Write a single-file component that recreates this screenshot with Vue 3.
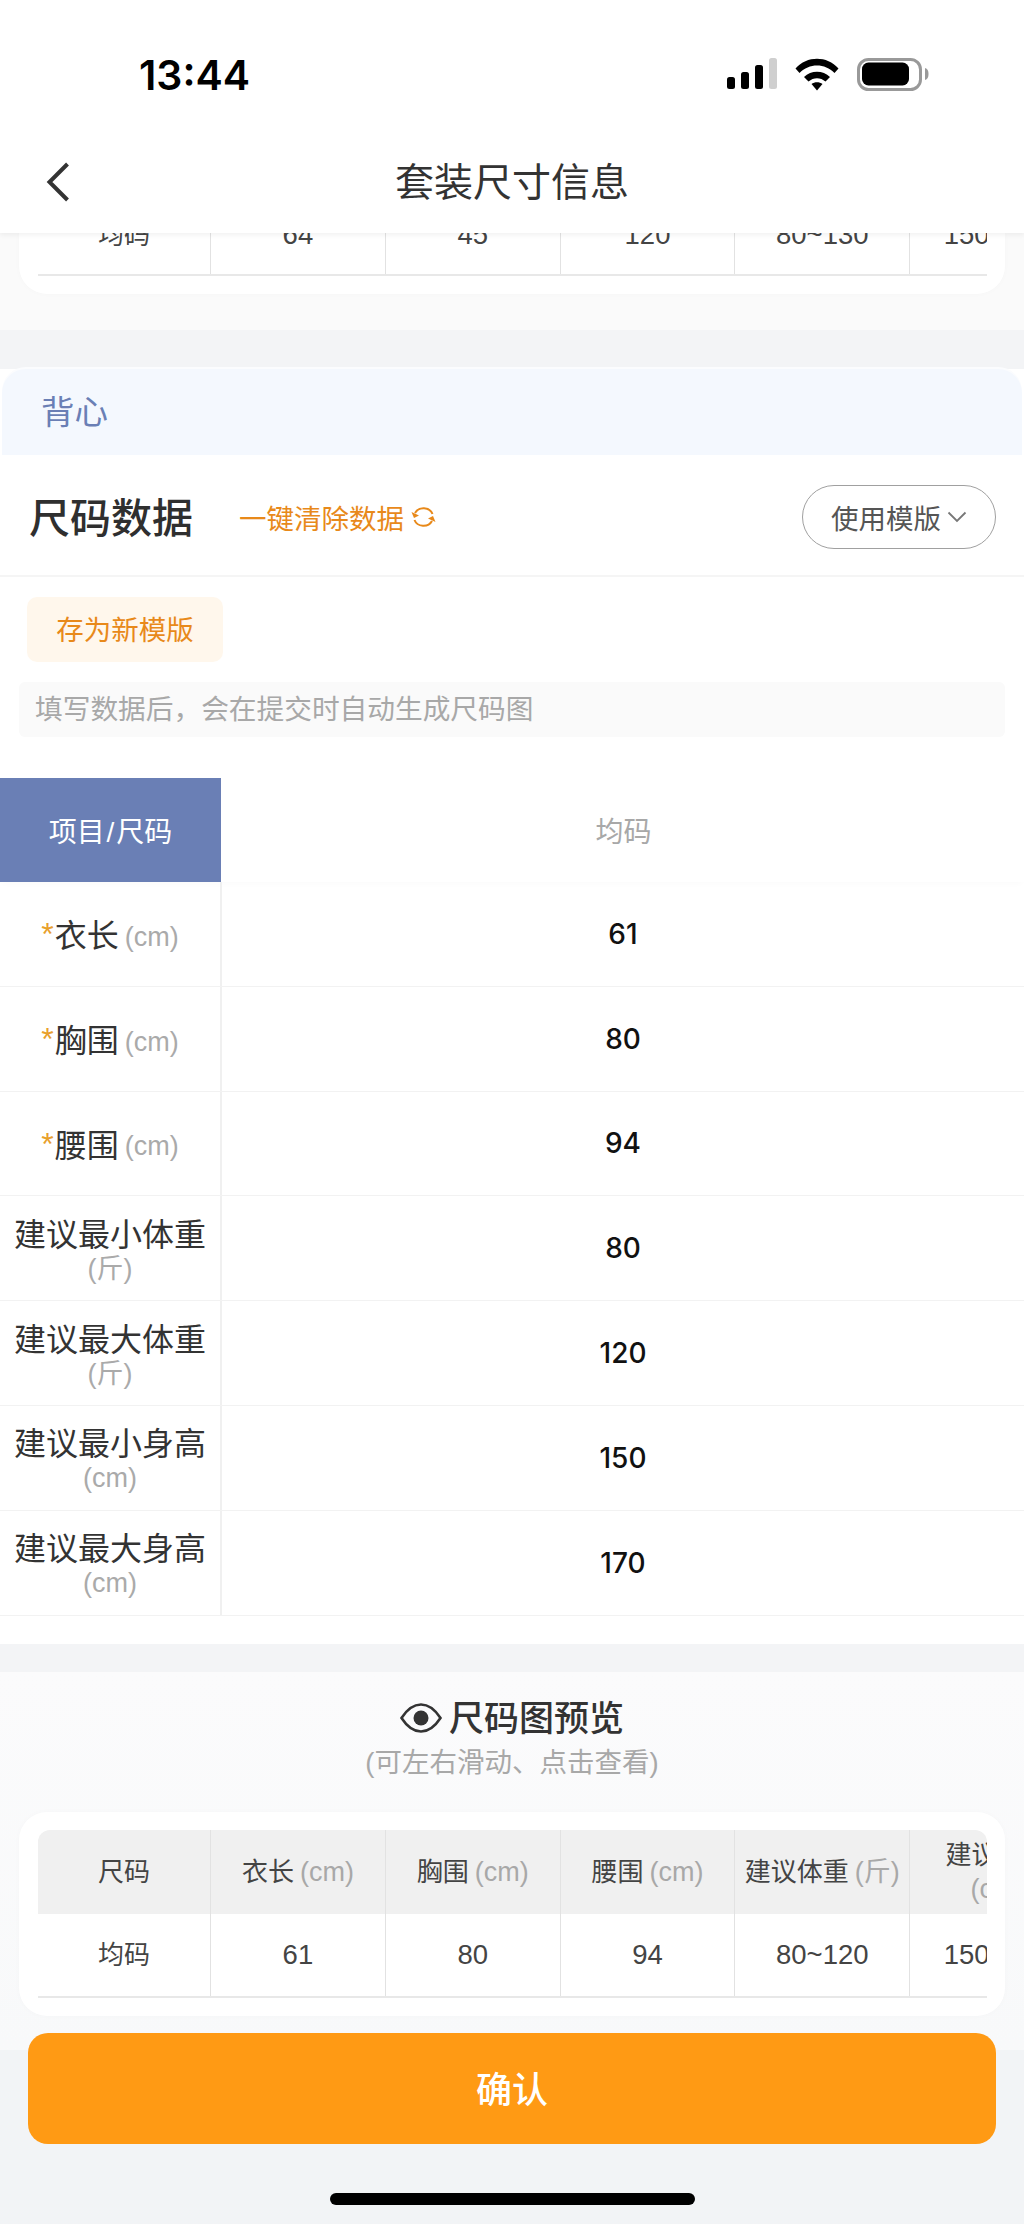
<script setup>
const topRow = ['均码', '64', '45', '120', '80~130', '150~170']
const dataRows = [
  { star: true, name: '衣长', unit: '(cm)', value: '61' },
  { star: true, name: '胸围', unit: '(cm)', value: '80' },
  { star: true, name: '腰围', unit: '(cm)', value: '94' },
  { name: '建议最小体重', unit: '(斤)', value: '80', stacked: true },
  { name: '建议最大体重', unit: '(斤)', value: '120', stacked: true },
  { name: '建议最小身高', unit: '(cm)', value: '150', stacked: true },
  { name: '建议最大身高', unit: '(cm)', value: '170', stacked: true }
]
const previewHead = [
  { name: '尺码' },
  { name: '衣长', unit: '(cm)' },
  { name: '胸围', unit: '(cm)' },
  { name: '腰围', unit: '(cm)' },
  { name: '建议体重', unit: '(斤)' },
  { name: '建议身高', unit: '(cm)', stacked: true }
]
const previewRow = ['均码', '61', '80', '94', '80~120', '150~170']
</script>

<template>
  <div class="page">
    <header class="top">
      <div class="status">
        <span class="time">13:44</span>
        <div class="status-icons">
          <svg width="50" height="32" viewBox="0 0 50 32">
            <rect x="0" y="19" width="8" height="12" rx="2.5" fill="#000" />
            <rect x="14" y="14" width="8" height="17" rx="2.5" fill="#000" />
            <rect x="28" y="7" width="8" height="24" rx="2.5" fill="#000" />
            <rect x="42" y="0" width="8" height="31" rx="2.5" fill="#cfcfcf" />
          </svg>
          <svg width="44" height="33" viewBox="0 0 44 33">
            <path d="M0.5 10.5 C12 -2.5 32 -2.5 43.5 10.5 L39.5 15 C30 5 14 5 4.500 15 Z" fill="#000" />
            <path d="M9 19 C16 12 28 12 35 19 L30.500 23.500 C25.500 19 18.500 19 13.500 23.500 Z" fill="#000" />
            <path d="M16.500 26 C19.500 23.500 24.500 23.500 27.500 26 L22 32.500 Z" fill="#000" />
          </svg>
          <svg width="72" height="33" viewBox="0 0 72 33">
            <rect x="1.500" y="1.500" width="62" height="30" rx="10" fill="none" stroke="#999" stroke-width="3" />
            <rect x="5" y="4.500" width="47" height="23" rx="6.500" fill="#000" />
            <path d="M68 10 C70.500 10.500 71.500 13 71.500 16 C71.500 19 70.500 21.500 68 22 Z" fill="#999" />
          </svg>
        </div>
      </div>
      <div class="nav">
        <svg class="back" width="24" height="40" viewBox="0 0 24 40">
          <path d="M21.500 2 L3.500 20 L21.500 38" fill="none" stroke="#333" stroke-width="4" />
        </svg>
        <h1 class="nav-title">套装尺寸信息</h1>
      </div>
    </header>

    <section class="prev-section">
      <div class="sheet sheet-clipped">
        <div class="sheet-table">
          <div class="sheet-row row-clipped">
            <span v-for="(c, i) in topRow" :key="i" class="sheet-cell clipped-cell" :class="{ num: i > 0 }">{{ c }}</span>
          </div>
        </div>
      </div>
    </section>

    <section class="editor">
      <div class="garment">背心</div>
      <div class="data-head">
        <h2 class="data-title">尺码数据</h2>
        <span class="clear">
          一键清除数据
          <svg width="25" height="22" viewBox="0 0 25 22">
            <path d="M21.500 8 A9.500 8.500 0 0 0 4 7" fill="none" stroke="#e8891a" stroke-width="2" />
            <path d="M3.500 14 A9.500 8.500 0 0 0 21 15" fill="none" stroke="#e8891a" stroke-width="2" />
            <path d="M0.500 6 L8 9.500 L3 12 Z" fill="#e8891a" />
            <path d="M24.500 16 L17 12.500 L22 10 Z" fill="#e8891a" />
          </svg>
        </span>
        <span class="template-btn">
          使用模版
          <svg width="20" height="12" viewBox="0 0 20 12">
            <path d="M1.500 1.500 L10 10 L18.500 1.500" fill="none" stroke="#777" stroke-width="1.800" />
          </svg>
        </span>
      </div>
      <div class="save-wrap"><span class="save-btn">存为新模版</span></div>
      <p class="hint">填写数据后，会在提交时自动生成尺码图</p>

      <div class="table">
        <div class="table-head">
          <div class="head-left">项目 / 尺码</div>
          <div class="head-right">均码</div>
        </div>
        <div v-for="r in dataRows" :key="r.name" class="table-row">
          <div class="row-left" :class="{ stacked: r.stacked }">
            <template v-if="r.stacked">
              <span class="row-name">{{ r.name }}</span>
              <span class="row-unit unit-line">{{ r.unit }}</span>
            </template>
            <template v-else>
              <span class="star">*</span><span class="row-name">{{ r.name }}</span>
              <span class="row-unit">{{ r.unit }}</span>
            </template>
          </div>
          <div class="row-value">{{ r.value }}</div>
        </div>
      </div>
    </section>

    <section class="preview">
      <div class="preview-title">
        <svg width="42" height="30" viewBox="0 0 42 30">
          <path d="M1.500 15 C8 5 14 1.500 21 1.500 C28 1.500 34 5 40.500 15 C34 25 28 28.500 21 28.500 C14 28.500 8 25 1.500 15 Z" fill="none" stroke="#333" stroke-width="2.600" />
          <circle cx="21" cy="15" r="7.500" fill="#333" />
        </svg>
        <span class="preview-name">尺码图预览</span>
      </div>
      <p class="preview-sub">(可左右滑动、点击查看)</p>
      <div class="sheet">
        <div class="sheet-table">
          <div class="sheet-row sheet-head">
            <span v-for="h in previewHead" :key="h.name" class="sheet-cell" :class="{ 'cell-stacked': h.stacked }">
              <span>{{ h.name }}</span>
              <span v-if="h.unit" class="sheet-unit">{{ h.unit }}</span>
            </span>
          </div>
          <div class="sheet-row">
            <span v-for="(c, i) in previewRow" :key="i" class="sheet-cell" :class="{ num: i > 0 }">{{ c }}</span>
          </div>
        </div>
      </div>
    </section>

    <footer class="footer">
      <button class="confirm" type="button">确认</button>
      <div class="home-bar"></div>
    </footer>
  </div>
</template>

<style>
html, body { margin: 0; padding: 0; background: #fff; }
</style>

<style scoped>
.page {
  width: 1024px;
  height: 2224px;
  overflow: hidden;
  display: flex;
  flex-direction: column;
  font-family: "Liberation Sans", "Noto Sans CJK SC", sans-serif;
  color: #333;
}
.top {
  height: 233px;
  background: #fff;
  box-shadow: 0 2px 5px rgba(0, 0, 0, 0.06);
  position: relative;
  z-index: 2;
  flex: none;
}
.status {
  height: 136px;
  display: flex;
  justify-content: space-between;
  align-items: flex-start;
  padding: 0 95px 0 139px;
  box-sizing: border-box;
}
.time {
  font-family: Inter, sans-serif;
  font-size: 41px;
  font-weight: 600;
  line-height: 48px;
  margin-top: 51px;
  color: #000;
}
.status-icons {
  display: flex;
  gap: 18px;
  margin-top: 58px;
}
.nav {
  height: 94px;
  position: relative;
  display: flex;
  align-items: center;
  justify-content: center;
}
.back {
  position: absolute;
  left: 46px;
  top: 26px;
}
.nav-title {
  margin: 0;
  font-size: 39px;
  font-weight: 400;
  color: #333;
  line-height: 92px;
}
.prev-section {
  height: 97px;
  flex: none;
  background: #fafafa;
  border-bottom: 39px solid #f3f4f6;
  padding: 0 19px;
}
.sheet {
  background: #fff;
  border-radius: 28px;
  padding: 18px 18px 18px 19px;
  box-shadow: 0 0 6px rgba(0, 0, 0, 0.02);
}
.sheet-clipped {
  padding-top: 0;
  border-radius: 0 0 28px 28px;
}
.sheet-table {
  width: 949px;
  overflow: hidden;
  border-bottom: 2px solid #e8e8e8;
  border-radius: 12px 12px 0 0;
}
.sheet-clipped .sheet-table { border-radius: 0; }
.sheet-row {
  display: flex;
  width: 1100px;
  height: 82px;
}
.sheet-head {
  background: #f0f0f0;
  height: 84px;
}
.row-clipped { height: 41px; }
.sheet-cell {
  flex: none;
  width: 174.800px;
  box-sizing: border-box;
  border-right: 1.500px solid #e2e2e2;
  display: flex;
  flex-wrap: wrap;
  align-content: center;
  align-items: center;
  justify-content: center;
  gap: 0 6px;
  font-size: 26px;
  line-height: 34px;
  color: #444;
}
.sheet-cell.num { font-size: 27.500px; }
.sheet-cell:first-child { width: 173px; }
.sheet-cell:last-child { border-right: 0; }
.clipped-cell {
  align-content: flex-start;
  overflow: hidden;
  line-height: 0;
  padding-top: 2px;
}
.cell-stacked { flex-direction: column; flex-wrap: nowrap; justify-content: center; }
.sheet-unit { color: #a8a8a8; font-size: 27px; }
.editor {
  flex: none;
  background: #fff;
}
.garment {
  height: 86px;
  margin: 0 2px;
  padding-left: 39px;
  box-sizing: border-box;
  background: #f4f8fe;
  border-radius: 24px 24px 0 0;
  box-shadow: 0 -2px 0 #fbfcfe;
  color: #6a7fb5;
  font-size: 33.500px;
  line-height: 88px;
}
.data-head {
  height: 122px;
  box-sizing: border-box;
  border-bottom: 2px solid #f5f5f5;
  display: flex;
  align-items: center;
  padding: 4px 28px 0 29px;
}
.data-title {
  margin: -4px 0 0;
  font-size: 41px;
  font-weight: 500;
  color: #2f2f2f;
}
.clear {
  margin-left: 46px;
  display: flex;
  align-items: center;
  gap: 7px;
  font-size: 27.500px;
  color: #e8891a;
}
.template-btn {
  margin-left: auto;
  width: 194px;
  height: 64px;
  box-sizing: border-box;
  border: 1.500px solid #a0a0a0;
  border-radius: 32px;
  display: flex;
  align-items: center;
  justify-content: center;
  gap: 6px;
  font-size: 27.500px;
  color: #555;
}
.save-wrap {
  padding: 20px 0 0 27px;
  height: 85px;
  box-sizing: content-box;
}
.save-btn {
  display: flex;
  align-items: center;
  justify-content: center;
  width: 196px;
  height: 65px;
  padding-bottom: 3px;
  box-sizing: border-box;
  background: #fff7ec;
  border-radius: 10px;
  font-size: 27.500px;
  color: #e8891a;
}
.hint {
  margin: 0 19px;
  height: 55px;
  padding-left: 16px;
  background: #fafafa;
  border-radius: 6px;
  font-size: 27.700px;
  line-height: 55px;
  color: #a8a8a8;
}
.table { margin-top: 41px; }
.table-head {
  display: flex;
  height: 104px;
  box-shadow: 0 4px 6px -2px rgba(0, 0, 0, 0.02);
}
.head-left {
  width: 221px;
  background: #6a7fb5;
  color: #fff;
  font-size: 28px;
  word-spacing: -6px;
  display: flex;
  align-items: center;
  justify-content: center;
}
.head-right {
  flex: 1;
  display: flex;
  align-items: center;
  justify-content: center;
  font-size: 28px;
  color: #a8a8a8;
  padding-left: 2px;
}
.table-row {
  display: flex;
  height: 104.800px;
  box-sizing: border-box;
  border-bottom: 1.500px solid #f2f2f2;
}
.row-left {
  width: 222px;
  box-sizing: border-box;
  border-right: 2px solid #f0f0f0;
  display: flex;
  align-items: center;
  justify-content: center;
  padding-top: 5px;
}
.row-left.stacked { flex-direction: column; line-height: 34px; padding-top: 3px; }
.row-name { font-size: 32px; color: #333; line-height: 38px; }
.star {
  color: #e8a02c;
  font-size: 32px;
  line-height: 30px;
  margin-top: -4px;
  margin-right: 1px;
}
.row-unit {
  font-size: 27px;
  color: #aaa;
  margin-left: 6px;
  margin-top: 2px;
}
.unit-line { margin: 0; line-height: 30px; }
.row-value {
  flex: 1;
  display: flex;
  align-items: center;
  justify-content: center;
  font-family: Inter, sans-serif;
  font-weight: 500;
  font-size: 28px;
  color: #111;
}
.preview {
  flex: none;
  border-top: 28px solid #f3f4f6;
  background: linear-gradient(#fbfbfc, #f8f9fa);
  height: 378px;
  margin-top: 28px;
  padding: 0 19px;
  box-sizing: content-box;
}
.preview-title {
  display: flex;
  align-items: center;
  justify-content: center;
  gap: 7px;
  padding-top: 26px;
  height: 40px;
  font-size: 35px;
  font-weight: 500;
  color: #333;
}
.preview-name { margin-top: -5px; }
.preview-sub {
  margin: 6px 0 30px;
  text-align: center;
  font-size: 27.500px;
  line-height: 38px;
  color: #a8a8a8;
}
.footer {
  flex: 1;
  background: #f2f4f6;
  position: relative;
  display: flex;
  flex-direction: column;
  align-items: center;
}
.confirm {
  flex: none;
  width: 968px;
  height: 111px;
  margin-top: -17px;
  padding: 0 0 3px;
  border: 0;
  border-radius: 20px;
  background: #ff9a14;
  color: #fff;
  font-family: inherit;
  font-size: 36px;
  font-weight: 500;
}
.home-bar {
  width: 365px;
  height: 12px;
  margin-top: 49px;
  border-radius: 6px;
  background: #000;
}
</style>
